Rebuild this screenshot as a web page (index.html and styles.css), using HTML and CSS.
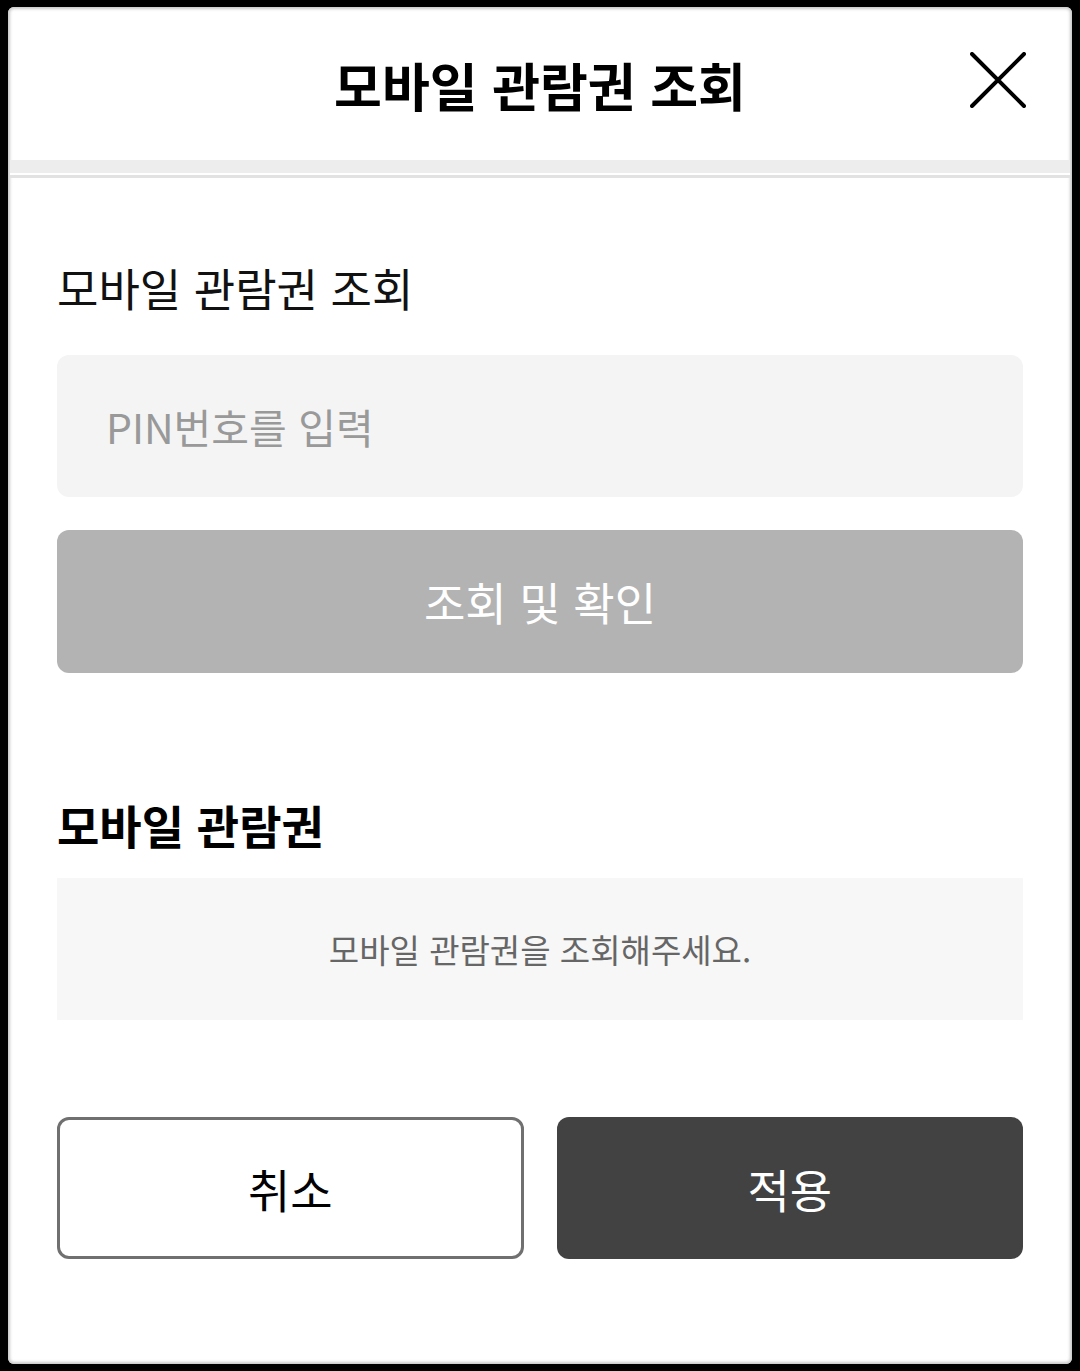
FILE: index.html
```html
<!DOCTYPE html>
<html lang="ko">
<head>
  <meta charset="UTF-8">
  <meta name="viewport" content="width=device-width, initial-scale=1.0">
  <title>모바일 관람권 조회</title>
  <link rel="stylesheet" href="styles.css">
</head>
<body>

  <div class="modal">
    <header class="modal-header">
      <h1>모바일 관람권 조회</h1>
      <button class="close-btn" aria-label="닫기">
        <svg width="56" height="56" viewBox="0 0 56 56">
          <path d="M2 2 L54 54 M54 2 L2 54" stroke="#000" stroke-width="4" stroke-linecap="round"/>
        </svg>
      </button>
    </header>

    <div class="divider"></div>

    <div class="modal-body">
      <p class="label">모바일 관람권 조회</p>
      <input type="text" class="pin-input" placeholder="PIN번호를 입력">
      <button class="search-btn">조회 및 확인</button>

      <h2 class="section-title">모바일 관람권</h2>
      <div class="result-box">모바일 관람권을 조회해주세요.</div>

      <div class="footer-btns">
        <button class="cancel-btn">취소</button>
        <button class="apply-btn">적용</button>
      </div>
    </div>
  </div>

</body>
</html>
```

FILE: styles.css
```css
html, body {
  margin: 0;
  padding: 0;
  background-color: #000;
}

body {
  font-family: "Noto Sans CJK KR", "Noto Sans", sans-serif;
  padding: 7px 8px 7px 8px;
}

.modal {
  background-color: #fff;
  border-radius: 6px;
  box-shadow: inset 0 0 3px 2px #c8c8c8;
  height: 1357px;
  box-sizing: border-box;
}

.modal-header {
  height: 153px;
  display: flex;
  align-items: center;
  justify-content: center;
  position: relative;
}

.modal-header h1 {
  margin: 0;
  font-size: 52px;
  font-weight: 700;
  color: #000;
  padding-top: 2px;
}

/* 닫기 버튼 */
.close-btn {
  position: absolute;
  right: 46px;
  top: 45px;
  width: 56px;
  height: 56px;
  padding: 0;
  border: none;
  background: none;
  cursor: pointer;
}

.close-btn svg {
  display: block;
}

.divider {
  height: 15px;
  background-color: #ededed;
  border-bottom: 3px solid #e2e2e2;
  box-shadow: inset 0 -2px 0 #fff;
  margin: 0 2px;
}

.modal-body {
  padding: 80px 49px 0;
  display: flex;
  flex-direction: column;
}

.label {
  margin: 0;
  font-size: 45px;
  font-weight: 400;
  line-height: 60px;
  color: #111;
}

.pin-input {
  margin-top: 37px;
  height: 142px;
  box-sizing: border-box;
  border: none;
  border-radius: 12px;
  background-color: #f4f4f4;
  padding: 0 49px;
  font-family: inherit;
  font-size: 41px;
  color: #333;
  outline: none;
}

.pin-input::placeholder {
  color: #999;
}

.search-btn {
  margin-top: 33px;
  height: 143px;
  border: none;
  border-radius: 12px;
  background-color: #b3b3b3;
  color: #fff;
  font-family: inherit;
  font-size: 45px;
  font-weight: 400;
  cursor: pointer;
}

.section-title {
  margin: 121px 0 0;
  font-size: 46px;
  font-weight: 700;
  line-height: 60px;
  color: #000;
}

.result-box {
  margin-top: 24px;
  height: 142px;
  background-color: #f7f7f7;
  display: flex;
  align-items: center;
  justify-content: center;
  font-size: 33px;
  color: #666;
}

.footer-btns {
  margin-top: 97px;
  display: grid;
  grid-template-columns: 1fr 1fr;
  gap: 33px;
}

.cancel-btn,
.apply-btn {
  height: 142px;
  border-radius: 12px;
  font-family: inherit;
  font-size: 46px;
  font-weight: 400;
  cursor: pointer;
}

.cancel-btn {
  background-color: #fff;
  border: 3px solid #707070;
  color: #000;
}

.apply-btn {
  background-color: #424242;
  border: none;
  color: #fff;
}
```
